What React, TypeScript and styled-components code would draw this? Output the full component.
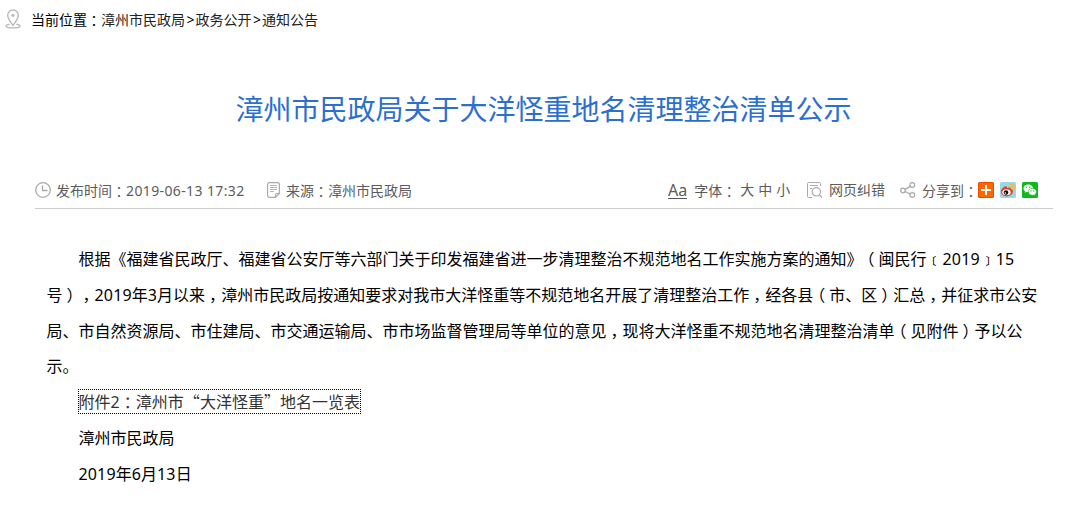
import styled, { createGlobalStyle } from "styled-components";

const PARTS = /([：，（）]|\d+)/;

const Zh = ({ children }: { children: string }) => (
  <>
    {children.split(PARTS).map((part, index) => {
      if (/^\d/.test(part)) return <Digits key={index}>{part}</Digits>;
      return PARTS.test(part) ? <Mark key={index}>{part}</Mark> : part;
    })}
  </>
);

const paragraph = [
  "根据《福建省民政厅、福建省公安厅等六部门关于印发福建省进一步清理整治不规范地名工作实施方案的通知》（闽民行﹝2019﹞15",
  "号），2019年3月以来，漳州市民政局按通知要求对我市大洋怪重等不规范地名开展了清理整治工作，经各县（市、区）汇总，并征求市公安",
  "局、市自然资源局、市住建局、市交通运输局、市市场监督管理局等单位的意见，现将大洋怪重不规范地名清理整治清单（见附件）予以公",
  "示。",
];

export default function App() {
  return (
    <Page lang="zh-CN">
      <GlobalStyle />
      <Breadcrumb>
        <PinIcon />
        <div>
          <Zh>当前位置：</Zh>
          <CrumbLink>漳州市民政局</CrumbLink>
          <Arrow>&gt;</Arrow>
          <CrumbLink>政务公开</CrumbLink>
          <Arrow>&gt;</Arrow>
          <CrumbLink>通知公告</CrumbLink>
        </div>
      </Breadcrumb>
      <Title>漳州市民政局关于大洋怪重地名清理整治清单公示</Title>
      <InfoBar>
        <InfoItem $gap={5} $width={232}>
          <ClockIcon />
          <span>
            <Zh>发布时间：</Zh>
            <Time>2019-06-13 17:32</Time>
          </span>
        </InfoItem>
        <InfoItem $gap={6} $width={401}>
          <SourceIcon />
          <span>
            <Zh>来源：漳州市民政局</Zh>
          </span>
        </InfoItem>
        <InfoItem $gap={7} $width={139}>
          <FontMark>Aa</FontMark>
          <SizeGroup>
            <span>
              <Zh>字体：</Zh>
            </span>
            <span>大</span>
            <span>中</span>
            <span>小</span>
          </SizeGroup>
        </InfoItem>
        <InfoItem $gap={6} $width={93}>
          <CorrectIcon />
          <span>网页纠错</span>
        </InfoItem>
        <InfoItem $gap={6}>
          <ShareIcon />
          <span>
            <Zh>分享到：</Zh>
          </span>
        </InfoItem>
        <ShareList>
          <PlusLogo />
          <WeiboLogo />
          <WechatLogo />
        </ShareList>
      </InfoBar>
      <Article>
        {paragraph.map((line, index) => (
          <Line key={line} $indent={index === 0}>
            <Zh>{line}</Zh>
          </Line>
        ))}
        <Line $indent>
          <Attachment>
            <Zh>附件2：漳州市</Zh>
            <Quote>“</Quote>大洋怪重<Quote>”</Quote>地名一览表
          </Attachment>
        </Line>
        <Line $indent>漳州市民政局</Line>
        <Line $indent>
          <Zh>2019年6月13日</Zh>
        </Line>
      </Article>
    </Page>
  );
}

const PinIcon = () => (
  <svg width="16" height="20" viewBox="0 0 16 20" fill="none" stroke="#bbb" strokeWidth="1.4">
    <path d="M8 16.500C6 13.200 2.700 10 2.700 6.300a5.300 5.300 0 0 1 10.600 0C13.300 10 10 13.200 8 16.500Z" />
    <circle cx="8" cy="6.300" r="1.600" fill="#bbb" stroke="none" />
    <path d="M4.600 15.200C2.500 15.500 1 16.100 1 17c0 1.200 3 1.900 7 1.900s7-.7 7-1.900c0-.9-1.500-1.500-3.600-1.800" />
  </svg>
);

const ClockIcon = () => (
  <svg width="16" height="16" viewBox="0 0 16 16" fill="none" stroke="#aaa" strokeWidth="1.3">
    <circle cx="8" cy="8" r="7.300" />
    <path d="M7.500 3.500v5h5" />
  </svg>
);

const SourceIcon = () => (
  <svg width="13" height="16" viewBox="0 0 13 16" fill="none" stroke="#aaa" strokeWidth="1.2">
    <path d="M8 15.400H2.600a2 2 0 0 1-2-2V2.600a2 2 0 0 1 2-2h7.800a2 2 0 0 1 2 2v8.900L8.500 15.400v-2.400a1.500 1.500 0 0 1 1.500-1.500h2.400" />
    <path d="M3 3.500h7M3 5.500h7M3 7.500h7M3 9.500h4" strokeWidth="1" stroke="#b5b5b5" />
  </svg>
);

const CorrectIcon = () => (
  <svg width="16" height="16" viewBox="0 0 16 16" fill="none" stroke="#aaa" strokeWidth="1">
    <path d="M5 15.500H1.500a1 1 0 0 1-1-1v-13a1 1 0 0 1 1-1h11a1 1 0 0 1 1 1V4M3 3.500h8M3 6.500h2" />
    <circle cx="9.300" cy="9.800" r="4.200" strokeWidth="1.2" />
    <path d="m12.300 12.800 2.700 2.700" strokeWidth="1.3" />
  </svg>
);

const ShareIcon = () => (
  <svg width="16" height="16" viewBox="0 0 16 16" fill="none" stroke="#aaa" strokeWidth="1.3">
    <circle cx="3" cy="8.500" r="2.300" />
    <circle cx="12.300" cy="3" r="2.400" />
    <circle cx="12.300" cy="13" r="2.400" />
    <path d="m5.200 7.400 5-3M5.200 9.500l5 2.500" />
  </svg>
);

const PlusLogo = () => (
  <svg width="16" height="16" viewBox="0 0 16 16">
    <rect width="16" height="16" rx="1.5" fill="#f60" />
    <path d="M1 .5h14M.5 1v14M15.500 1v14M1 15.500h14" stroke="#f04c00" />
    <path d="M8 3v10M3 8h10" stroke="#fff" strokeWidth="2" />
  </svg>
);

const WeiboLogo = () => (
  <svg width="16" height="16" viewBox="0 0 16 16">
    <rect width="16" height="16" rx="1.5" fill="#9bd8e6" />
    <path
      d="M1 9.500C1 7 4.500 4 6.300 4.400c.9.200.8 1 .6 1.500 1.800-.7 4-.8 3.900 1.100 1.400.3 2.200 1.100 2.200 2.400 0 2.700-3.300 4.900-6.300 4.900S1 12.500 1 9.500Z"
      fill="#e6402b"
    />
    <ellipse cx="6.500" cy="10.200" rx="4.200" ry="2.900" fill="#fff" />
    <circle cx="6" cy="10.500" r="2.300" fill="#111" />
    <circle cx="5.300" cy="11" r=".8" fill="#fff" />
    <path
      d="M10 2.300c3-.5 5 1.700 4.300 4.600M10.300 4.500c1.400-.2 2.200.7 1.900 2"
      fill="none"
      stroke="#f5b52b"
      strokeWidth="1.1"
      strokeLinecap="round"
    />
  </svg>
);

const WechatLogo = () => (
  <svg width="16" height="16" viewBox="0 0 16 16">
    <rect width="16" height="16" rx="1.5" fill="#0db91b" />
    <path
      d="M6.300 2.500C3.600 2.500 1.500 4.200 1.500 6.400c0 1.200.6 2.200 1.700 2.900l-.4 1.400 1.700-.8c.6.200 1.200.2 1.800.2 2.700 0 4.800-1.600 4.800-3.700S9 2.500 6.300 2.500Z"
      fill="#fff"
    />
    <path
      d="M10.400 6.400c-2.400 0-4.200 1.500-4.200 3.400s1.800 3.400 4.200 3.400c.5 0 1-.1 1.400-.2l1.500.8-.4-1.300c1-.6 1.600-1.600 1.600-2.700 0-1.900-1.800-3.400-4.100-3.400Z"
      fill="#fff"
      stroke="#0db91b"
      strokeWidth=".6"
    />
    <g fill="#0db91b">
      <circle cx="4.600" cy="5.200" r=".7" />
      <circle cx="7.800" cy="5.200" r=".7" />
      <circle cx="9" cy="8.900" r=".6" />
      <circle cx="11.700" cy="8.900" r=".6" />
    </g>
  </svg>
);

const GlobalStyle = createGlobalStyle`
  body {
    margin: 0;
    background-color: #fff;
    font-family: "Noto Sans", "Noto Sans CJK SC", sans-serif;
    font-size: 14px;
    color: #000;
    text-spacing-trim: space-all;
  }

  svg {
    display: block;
    flex-shrink: 0;
  }
`;

const Page = styled.div`
  width: 1082px;
  height: 517px;
  box-sizing: border-box;
  overflow: hidden;
  white-space: nowrap;
`;

/* half-width glyph centred in a full-width cell */
const Mark = styled.span`
  padding: 0 0.25em;
  font-family: "Noto Sans CJK SC", sans-serif;
  font-feature-settings: "halt";
`;

const Digits = styled.span`
  letter-spacing: 0.15px;
`;

const Quote = styled.span`
  font-family: "Noto Sans CJK SC", sans-serif;
`;

const Breadcrumb = styled.div`
  height: 38px;
  padding-left: 5px;
  display: flex;
  align-items: center;
  gap: 10px;
  line-height: 20px;
`;

const CrumbLink = styled.a`
  color: #222;
`;

const Arrow = styled.span`
  padding: 0 1px 0 1.5px;
`;

const Title = styled.h1`
  margin: 50px 0 0;
  padding-left: 235.5px;
  font-size: 28px;
  font-weight: normal;
  line-height: 42px;
  color: #2b6fcf;
`;

const InfoBar = styled.div`
  height: 36px;
  margin: 42px 29px 0 35px;
  display: flex;
  align-items: center;
  border-bottom: 1px solid #ccc;
  color: #5c5c5c;
  line-height: 20px;
`;

const InfoItem = styled.div<{ $gap: number; $width?: number }>`
  width: ${({ $width }) => ($width ? `${$width}px` : "auto")};
  flex-shrink: 0;
  display: flex;
  align-items: center;
  gap: ${({ $gap }) => $gap}px;
`;

const Time = styled.span`
  letter-spacing: 0.38px;
`;

const FontMark = styled.span`
  border-bottom: 1px solid #555;
  font-size: 16px;
  line-height: 16px;
`;

const SizeGroup = styled.div`
  display: flex;
  gap: 4px;
`;

const ShareList = styled.div`
  display: flex;
  gap: 6px;
`;

const Article = styled.div`
  margin-top: 31px;
  padding-left: 46.5px;
  font-size: 16px;
`;

const Line = styled.div<{ $indent?: boolean }>`
  height: 36px;
  padding-left: ${({ $indent }) => ($indent ? 32 : 0)}px;
  line-height: 36px;
`;

const Attachment = styled.a`
  display: inline-block;
  outline: 1px dotted #000;
  line-height: 22px;
  color: #333;
`;
